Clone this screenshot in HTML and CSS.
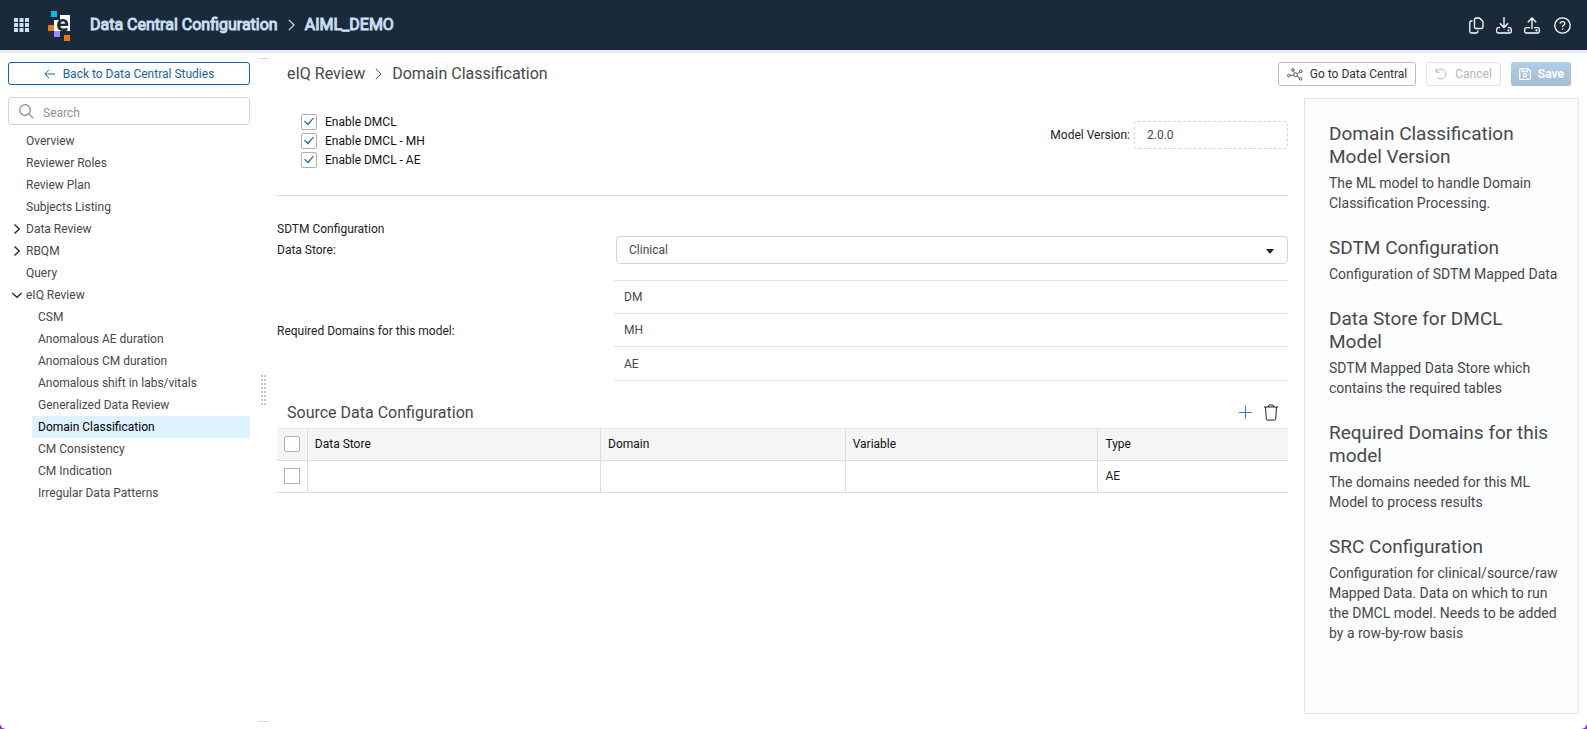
FILE: index.html
```html
<!DOCTYPE html>
<html lang="en">
<head>
<meta charset="utf-8">
<title>Data Central Configuration</title>
<link rel="stylesheet" href="styles.css">
</head>
<body>
<div class="app">
  <header class="topbar">
    <button class="icon-btn" type="button" aria-label="Applications">
      <svg width="15" height="14" viewBox="0 0 15 14" fill="#c9dff2"><path d="M0 0h4v4H0zM5.500 0h4v4h-4zM11 0h4v4h-4zM0 5h4v4H0zM5.500 5h4v4h-4zM11 5h4v4h-4zM0 10h4v4H0zM5.500 10h4v4h-4zM11 10h4v4h-4z"/></svg>
    </button>
    <svg class="logo" width="22" height="30" viewBox="0 0 22 30" role="img" aria-label="Home">
      <path fill="#00c1de" d="M3 0h6v6H3z"/>
      <path fill="#fff" d="M12 4h10v16H6V9h6z"/>
      <path fill="#ee7712" d="M0 14h6v6H0zM16 24h6v6h-6z"/>
      <path fill="#9a8cff" d="M6 20h6v6H6z"/>
      <text class="logo-letter" x="8" y="20">e</text>
    </svg>
    <div class="crumbs">
      <span>Data Central Configuration</span>
      <svg width="7" height="12" viewBox="0 0 7 12" fill="none" stroke="#c9dff2" stroke-width="1.200"><path d="M.8.8 6 6 .8 11.200"/></svg>
      <span>AIML_DEMO</span>
    </div>
    <div class="tools">
      <button class="icon-btn" type="button" aria-label="Copy"><svg width="16" height="17" viewBox="0 0 16 17" fill="none" stroke="#fff" stroke-width="1.300"><path d="M8 1h3.500L15 4.500V10a1.500 1.500 0 0 1-1.500 1.500H8A1.500 1.500 0 0 1 6.500 10V2.500A1.500 1.500 0 0 1 8 1zM4.500 4H3.300A1.500 1.500 0 0 0 1.800 5.500v9A1.500 1.500 0 0 0 3.300 16h5a1.500 1.500 0 0 0 1.500-1.500v-1"/></svg></button>
      <button class="icon-btn" type="button" aria-label="Download"><svg width="16" height="17" viewBox="0 0 16 17" fill="none" stroke="#fff" stroke-width="1.300"><path d="M8 0v10.500M3.800 6.300 8 10.500l4.200-4.200M4 10.700H2.200a1.500 1.500 0 0 0-1.500 1.500v2.300A1.500 1.500 0 0 0 2.200 16h11.600a1.500 1.500 0 0 0 1.500-1.500v-2.300a1.500 1.500 0 0 0-1.500-1.500H12"/><circle cx="12.500" cy="13.400" r=".5"/></svg></button>
      <button class="icon-btn" type="button" aria-label="Upload"><svg width="16" height="17" viewBox="0 0 16 17" fill="none" stroke="#fff" stroke-width="1.300"><path d="M8 12V1M3.800 5.200 8 1l4.200 4.200M6 10.700H2.200a1.500 1.500 0 0 0-1.500 1.500v2.300A1.500 1.500 0 0 0 2.200 16h11.600a1.500 1.500 0 0 0 1.500-1.500v-2.300a1.500 1.500 0 0 0-1.500-1.500H10"/><circle cx="12.500" cy="13.400" r=".5"/></svg></button>
      <button class="icon-btn help-btn" type="button" aria-label="Help"><svg width="17" height="17" viewBox="0 0 17 17" fill="none" stroke="#fff" stroke-width="1.300"><circle cx="8.500" cy="8.500" r="7.700"/><path d="M6.200 6.800c0-1.400 1-2.200 2.300-2.200s2.300.8 2.300 2c0 1.700-2.200 1.700-2.200 3.300"/><path d="M8.600 11.400v1.300"/></svg></button>
    </div>
  </header>

  <div class="body">
    <aside class="sidebar">
      <button class="back" type="button">
        <svg width="11" height="10" viewBox="0 0 11 10" fill="none" stroke="#1664a5"><path d="M5 .8.800 5 5 9.200M1 5h10"/></svg>
        Back to Data Central Studies
      </button>
      <label class="search">
        <svg width="15" height="15" viewBox="0 0 15 15" fill="none" stroke="#8a8a8a" stroke-width="1.200"><circle cx="6" cy="6" r="5.300"/><path d="m9.900 9.900 4.500 4.500"/></svg>
        <input type="search" placeholder="Search" aria-label="Search">
      </label>
      <nav>
        <ul class="tree">
          <li><a href="#">Overview</a></li>
          <li><a href="#">Reviewer Roles</a></li>
          <li><a href="#">Review Plan</a></li>
          <li><a href="#">Subjects Listing</a></li>
          <li><a href="#"><svg class="twist" width="10" height="10" viewBox="0 0 10 10"><path d="m2.500.5 4.800 4.500-4.800 4.500"/></svg>Data Review</a></li>
          <li><a href="#"><svg class="twist" width="10" height="10" viewBox="0 0 10 10"><path d="m2.500.5 4.800 4.500-4.800 4.500"/></svg>RBQM</a></li>
          <li><a href="#">Query</a></li>
          <li><a href="#"><svg class="twist" width="10" height="10" viewBox="0 0 10 10"><path d="m.3 3 4.700 4.300L9.700 3"/></svg>eIQ Review</a>
            <ul class="subtree">
              <li><a href="#">CSM</a></li>
              <li><a href="#">Anomalous AE duration</a></li>
              <li><a href="#">Anomalous CM duration</a></li>
              <li><a href="#">Anomalous shift in labs/vitals</a></li>
              <li><a href="#">Generalized Data Review</a></li>
              <li><a href="#" class="current" aria-current="page">Domain Classification</a></li>
              <li><a href="#">CM Consistency</a></li>
              <li><a href="#">CM Indication</a></li>
              <li><a href="#">Irregular Data Patterns</a></li>
            </ul>
          </li>
        </ul>
      </nav>
    </aside>

    <div class="splitter"><span class="grip"></span></div>

    <section class="page">
      <div class="page-head">
        <h1 class="title">
          <span>eIQ Review</span>
          <svg width="7" height="12" viewBox="0 0 7 12" fill="none" stroke="#555"><path d="M.8.8 6 6 .8 11.200"/></svg>
          <span>Domain Classification</span>
        </h1>
        <div class="actions">
          <button class="btn" type="button">
            <svg width="16" height="13" viewBox="0 0 16 13" fill="none" stroke="#444" stroke-width=".9"><circle cx="6" cy="2" r="1.300"/><circle cx="1.800" cy="7.500" r="1.300"/><circle cx="8.500" cy="6.800" r="1.900"/><circle cx="13.800" cy="3.300" r="1.300"/><circle cx="13.600" cy="10.800" r="1.300"/><path d="m6.500 3.200 1 2M3.100 7.400l3.500-.3M10.200 6l2.500-1.900M10 8l2.600 2"/></svg>
            Go to Data Central
          </button>
          <button class="btn cancel" type="button" disabled>
            <svg width="12" height="12" viewBox="0 0 12 12" fill="none" stroke="#b5b5b5"><path d="M1 .5v3.700h3.700M1.200 4A5 5 0 1 1 2 9.300"/></svg>
            Cancel
          </button>
          <button class="btn save" type="button" disabled>
            <svg width="12" height="12" viewBox="0 0 12 12" fill="none" stroke="#fff" stroke-width="1.200"><path d="M1.500.7h7.300l2.500 2.500v7.300a.8.8 0 0 1-.8.8h-9a.8.8 0 0 1-.8-.8v-9a.8.8 0 0 1 .8-.8zM3.300.7v2.900h4.900V.7"/><circle cx="6" cy="7.300" r="1.600"/></svg>
            Save
          </button>
        </div>
      </div>

      <div class="content">
        <main class="form">
          <div class="model">
            <div class="checks">
              <label class="check"><input type="checkbox" checked>Enable DMCL</label>
              <label class="check"><input type="checkbox" checked>Enable DMCL - MH</label>
              <label class="check"><input type="checkbox" checked>Enable DMCL - AE</label>
            </div>
            <label class="version">Model Version: <input type="text" value="2.0.0" readonly></label>
          </div>

          <div class="sdtm">
            <div class="section-name">SDTM Configuration</div>
            <label class="name store-name" for="store">Data Store:</label>
            <div class="select-wrap">
              <select id="store"><option>Clinical</option></select>
              <svg class="caret" width="8" height="5" viewBox="0 0 8 5" fill="#222"><path d="M0 0h8L4.500 4.500h-1z"/></svg>
            </div>
            <div class="name">Required Domains for this model:</div>
            <ul class="domains">
              <li>DM</li>
              <li>MH</li>
              <li>AE</li>
            </ul>
          </div>

          <div class="source-head">
            <h2 class="source-title">Source Data Configuration</h2>
            <button class="icon-btn" type="button" aria-label="Add row"><svg width="14" height="14" viewBox="0 0 14 14" fill="none" stroke="#4580b5"><path d="M7.500.5v13M1 7.500h13"/></svg></button>
            <button class="icon-btn" type="button" aria-label="Delete row"><svg width="14" height="17" viewBox="0 0 14 17" fill="none" stroke="#222"><path d="M0 3h14M4 3l1-2h4l1 2M1.500 3l.8 12.200a1 1 0 0 0 1 .9h7.400a1 1 0 0 0 1-.9L12.500 3"/></svg></button>
          </div>
          <table class="grid">
            <colgroup><col class="c-check"><col class="c-store"><col class="c-domain"><col class="c-variable"><col></colgroup>
            <thead>
              <tr><th><input type="checkbox" aria-label="Select all rows"></th><th>Data Store</th><th>Domain</th><th>Variable</th><th>Type</th></tr>
            </thead>
            <tbody>
              <tr><td><input class="square" type="checkbox" aria-label="Select row"></td><td></td><td></td><td></td><td>AE</td></tr>
            </tbody>
          </table>
        </main>

        <aside class="help">
          <h3>Domain Classification Model Version</h3>
          <p>The ML model to handle Domain Classification Processing.</p>
          <h3>SDTM Configuration</h3>
          <p>Configuration of SDTM Mapped Data</p>
          <h3>Data Store for DMCL Model</h3>
          <p>SDTM Mapped Data Store which contains the required tables</p>
          <h3>Required Domains for this model</h3>
          <p>The domains needed for this ML Model to process results</p>
          <h3>SRC Configuration</h3>
          <p>Configuration for clinical/source/raw Mapped Data. Data on which to run the DMCL model. Needs to be added by a row-by-row basis</p>
        </aside>
      </div>
    </section>
  </div>
</div>
</body>
</html>
```
FILE: styles.css
```css
* { box-sizing: border-box; }
body {
  margin: 0;
  background: #7440c0;
  color: #222;
  font: 12px/20px Roboto, "Liberation Sans", sans-serif;
}
button, input, select { font: inherit; color: inherit; }
button, select, a { cursor: pointer; }
svg { display: block; flex: none; }
ul { list-style: none; margin: 0; padding: 0; }
h1, h2, h3, p { margin: 0; font-weight: 400; }

.app {
  display: flex;
  flex-direction: column;
  min-height: 100vh;
  background: #fff;
  border-radius: 0 0 6px 6px;
}

/* Top bar */
.topbar {
  display: flex;
  align-items: center;
  height: 53px;
  padding: 0 16px 0 14px;
  background: #192b3a;
  border-bottom: 3px solid #ebebeb;
}
.icon-btn {
  border: 0;
  padding: 0;
  background: none;
}
.logo { margin: 2px 0 0 19px; overflow: visible; }
.logo-letter {
  font: 700 22px "Noto Sans", sans-serif;
  fill: #192b3a;
}
.crumbs {
  display: flex;
  align-items: center;
  gap: 10px;
  margin-left: 20px;
  color: #c9dff2;
  font-size: 16px;
  -webkit-text-stroke: 1px #c9dff2;
}
.tools {
  display: flex;
  align-items: center;
  gap: 12px;
  margin-left: auto;
}
.help-btn { margin-left: 2px; }

/* Sidebar */
.body { display: flex; flex: 1; }
.sidebar {
  display: flex;
  flex-direction: column;
  width: 258px;
  padding: 9px 8px 8px;
  flex: none;
}
.back {
  display: flex;
  align-items: center;
  justify-content: center;
  gap: 8px;
  height: 23px;
  border: 1px solid #1664a5;
  border-radius: 3px;
  background: #fff;
  color: #1664a5;
}
.search {
  display: flex;
  align-items: center;
  gap: 9px;
  height: 28px;
  margin: 12px 0 5px;
  padding: 0 10px;
  border: 1px solid #d5d5d5;
  border-radius: 3px;
}
.search input {
  flex: 1;
  min-width: 0;
  border: 0;
  padding: 3px 0 0;
  outline: 0;
  background: none;
}
.search input::placeholder { color: #909090; opacity: 1; }
.tree a {
  display: flex;
  align-items: center;
  position: relative;
  height: 22px;
  padding-left: 18px;
  color: #484848;
  text-decoration: none;
}
.twist {
  position: absolute;
  left: 4px;
  fill: none;
  stroke: #222;
  stroke-width: 1.300;
}
.subtree { padding-left: 24px; }
.subtree a { padding-left: 6px; }
.subtree .current { background: #def2ff; color: #000; }

/* Splitter */
.splitter {
  display: flex;
  align-items: center;
  justify-content: center;
  width: 11px;
  margin: 5px 0 7px;
  border-top: 1px solid #dcdcdc;
  border-bottom: 1px solid #dcdcdc;
}
.grip {
  width: 5px;
  height: 30px;
  background:
    repeating-linear-gradient(#fff0 0 2px, #fff 2px 4px),
    linear-gradient(90deg, #c8c8c8 2px, #fff 2px 3px, #c8c8c8 3px);
}

/* Page */
.page {
  display: flex;
  flex-direction: column;
  flex: 1;
  min-width: 0;
  padding: 9px 8px 15px;
}
.page-head {
  display: flex;
  align-items: center;
  justify-content: space-between;
  height: 24px;
  padding: 0 8px 0 10px;
}
.title {
  display: flex;
  align-items: center;
  gap: 10px;
  color: #484848;
  font-size: 16px;
}
.actions { display: flex; gap: 10px; }
.btn {
  display: flex;
  align-items: center;
  gap: 7px;
  height: 24px;
  padding: 0 8px;
  border: 1px solid #bdbdbd;
  border-radius: 3px;
  background: #fff;
  color: #333;
}
.cancel {
  gap: 8px;
  border-color: #e2e2e2;
  color: #b5b5b5;
}
.save {
  padding: 0 7px 0 8px;
  border: 0;
  background: linear-gradient(#b0cfe9, #a5bbd2);
  color: #fff;
  font-weight: 700;
}
.content {
  display: flex;
  flex: 1;
  gap: 16px;
  margin-top: 12px;
}
.form { flex: 1; min-width: 0; }

.model {
  display: flex;
  justify-content: space-between;
  height: 98px;
  padding: 14px 0 0 24px;
  border-bottom: 1px solid #dcdcdc;
}
.check {
  display: flex;
  align-items: center;
  gap: 8px;
  height: 19px;
  color: #111;
}
input[type="checkbox"] {
  display: grid;
  place-items: center;
  appearance: none;
  width: 16px;
  height: 16px;
  margin: 0;
  border: 1px solid #b0b0b0;
  border-radius: 2px;
  background: #fff;
}
input.square { border-radius: 0; }
input[type="checkbox"]:checked::before {
  content: "";
  width: 10px;
  height: 8px;
  background: #1f66ad;
  clip-path: polygon(0 50%, 8% 40%, 38% 76%, 92% 0, 100% 8%, 40% 100%);
}
.version {
  display: flex;
  align-items: center;
  gap: 4px;
  height: 28px;
  margin-top: 9px;
}
.version input {
  width: 154px;
  height: 28px;
  padding: 0 12px;
  border: 1px dashed #d5d5d5;
  border-radius: 4px;
  background: #fff;
  color: #484848;
}

.sdtm {
  display: grid;
  grid-template-columns: 337px 1fr;
  align-items: center;
  padding-top: 23px;
}
.section-name { grid-column: 1 / -1; }
.store-name { align-self: start; padding-top: 1px; }
.select-wrap {
  display: flex;
  align-items: center;
  position: relative;
  margin: -3px 0 16px 2px;
}
.select-wrap select {
  width: 100%;
  height: 28px;
  padding: 0 12px;
  appearance: none;
  border: 1px solid #d5d5d5;
  border-radius: 4px;
  background: #fff;
  color: #484848;
}
.caret { position: absolute; right: 14px; top: 13px; pointer-events: none; }
.domains {
  border-top: 1px solid #e4e4e4;
  color: #484848;
}
.domains li {
  padding: 6px 10px;
  border-bottom: 1px solid #e4e4e4;
}
.domains li:last-child { padding-top: 7px; }

.source-head {
  display: flex;
  align-items: center;
  gap: 12px;
  height: 32px;
  margin-top: 15px;
  padding: 0 10px;
}
.source-title {
  flex: 1;
  padding-top: 2px;
  color: #484848;
  font-size: 16px;
}
.grid {
  width: 100%;
  table-layout: fixed;
  border-collapse: collapse;
  color: #222;
}
.c-check { width: 3%; }
.c-store { width: 29%; }
.c-domain { width: 24.2%; }
.c-variable { width: 25%; }
.grid th, .grid td {
  height: 32px;
  padding: 0 7px 2px;
  border: 1px solid #dcdcdc;
  font-weight: 400;
  text-align: left;
}
.grid th { background: #f5f5f5; color: #111; border-top-color: #e8e8e8; }
.grid tr > :first-child { border-left: 0; }
.grid tr > :last-child { border-right: 0; }

.help {
  width: 275px;
  padding: 23px 16px 23px 24px;
  border: 1px solid #e4e6e8;
  background: #fcfdff;
  color: #484848;
}
.help h3 { margin-bottom: 5px; padding-right: 8px; font-size: 19px; line-height: 23px; }
.help p { margin-bottom: 23px; font-size: 14px; line-height: 20px; }
```
